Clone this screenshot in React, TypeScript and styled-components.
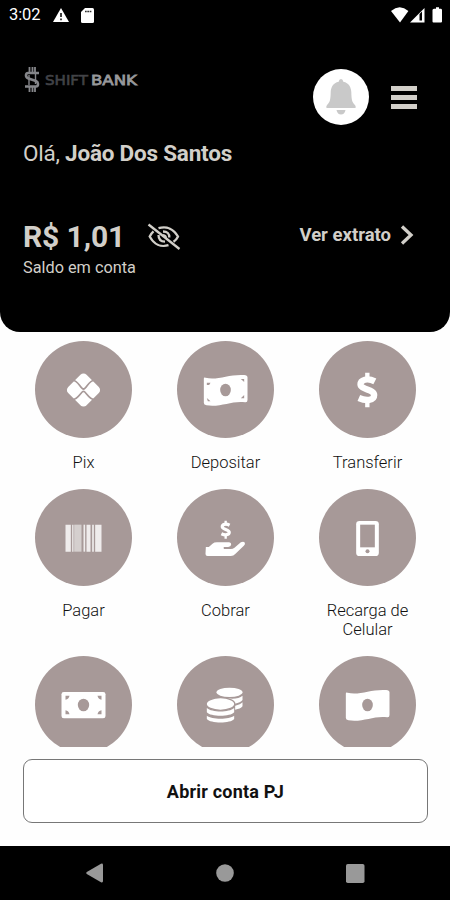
import React from 'react';
import styled, { createGlobalStyle } from 'styled-components';

const TAUPE = '#a79998';
const SAND = '#d2cfc9';

const GlobalStyle = createGlobalStyle`
  * { box-sizing: border-box; }
  body { margin: 0; background: #fff; font-family: Roboto, sans-serif; }
  button { font: inherit; border: 0; padding: 0; background: none; color: inherit; }
  svg { display: block; flex: none; }
`;

const Screen = styled.div`
  width: 450px;
  height: 900px;
  display: flex;
  flex-direction: column;
  overflow: hidden;
  background: #fefefe;
`;

const Header = styled.header`
  height: 332px;
  flex: none;
  background: #000;
  border-radius: 0 0 20px 20px;
  color: ${SAND};
`;

const StatusBar = styled.div`
  height: 30px;
  display: flex;
  align-items: center;
  justify-content: space-between;
  padding: 0 8px 0 9px;
  color: #fff;
`;

const StatusGroup = styled.div<{ $gap: number }>`
  display: flex;
  align-items: center;
  gap: ${p => p.$gap}px;
`;

const Clock = styled.span`
  font-size: 16.5px;
  font-weight: 400;
  line-height: 20px;
  letter-spacing: -0.1px;
  width: 32px;
`;

const BrandRow = styled.div`
  display: flex;
  justify-content: space-between;
  align-items: flex-start;
  height: 109px;
  padding: 37px 33px 0 24px;
`;

const Actions = styled.div`
  display: flex;
  align-items: center;
  gap: 22px;
  margin-top: 2px;
`;

const BellButton = styled.button`
  width: 56px;
  height: 56px;
  border-radius: 50%;
  background: #fff;
  display: grid;
  place-items: center;
`;

const MenuButton = styled.button`
  width: 26px;
  display: flex;
  flex-direction: column;
  gap: 4px;
`;

const MenuBar = styled.span`
  height: 5px;
  background: ${SAND};
`;

const Greeting = styled.h1`
  margin: 0;
  padding-left: 23px;
  font-size: 22.5px;
  font-weight: 400;
  line-height: 28px;
  height: 80px;
  letter-spacing: -0.22px;
`;

const AccountRow = styled.div`
  display: flex;
  justify-content: space-between;
  align-items: flex-start;
  padding: 0 36px 0 23px;
`;

const BalanceLine = styled.div`
  display: flex;
  align-items: center;
  gap: 22px;
  height: 35px;
`;

const Balance = styled.strong`
  font-size: 30px;
  font-weight: 700;
  line-height: 36px;
  letter-spacing: -0.1px;
  width: 102px;
  white-space: nowrap;
`;

const Caption = styled.div`
  font-size: 16.3px;
  line-height: 20px;
  margin-top: 4px;
`;

const StatementLink = styled.button`
  display: flex;
  align-items: center;
  gap: 9px;
  height: 31px;
  font-size: 18.5px;
  font-weight: 700;
`;

const Services = styled.main`
  height: 415px;
  flex: none;
  overflow: hidden;
  display: grid;
  grid-template-columns: repeat(3, 142px);
  grid-template-rows: 148px 167px 148px;
  justify-content: center;
  padding: 9px 0 0 1px;
`;

const Service = styled.div`
  display: flex;
  flex-direction: column;
  align-items: center;
`;

const Disc = styled.div`
  width: 97px;
  height: 97px;
  flex: none;
  border-radius: 50%;
  background: ${TAUPE};
  display: grid;
  place-items: center;
`;

const ServiceName = styled.span`
  width: 100px;
  margin-top: 15px;
  text-align: center;
  font-size: 16.5px;
  line-height: 19px;
  font-weight: 300;
  color: #111;
`;

const Footer = styled.div`
  height: 99px;
  flex: none;
  padding: 12px 22px 0 23px;
`;

const OpenAccount = styled.button`
  width: 100%;
  height: 64px;
  border: 1px solid #777;
  border-radius: 9px;
  background: #fff;
  color: #111;
  font-size: 18px;
  font-weight: 700;
  letter-spacing: 0.2px;
  padding-top: 1px;
`;

const NavBar = styled.nav`
  flex: 1;
  background: #000;
  display: flex;
  justify-content: space-between;
  align-items: center;
  padding: 0 85px 0 86px;
`;

const Glyph = ({ children }: { children: React.ReactNode }) => (
  <svg width="48" height="48" viewBox="-70.5 -72 144 144" fill="#fff">{children}</svg>
);

const PixIcon = () => (
  <Glyph>
    <rect x="-39" y="-39" width="78" height="78" rx="13" transform="rotate(45)" />
    <path d="M-34-30C-16-27-14-14-4-5Q0-1 4-5C14-14 16-27 34-30M-34 30C-16 27-14 16-4 6Q0 2 4 6C14 16 16 27 34 30" fill="none" stroke={TAUPE} strokeWidth="5" />
  </Glyph>
);

const WavyBill = ({ corners = false }: { corners?: boolean }) => (
  <Glyph>
    <path d="M-65-33Q-66-38-60-37C-25-28 10-48 56-45Q66-44 66-38V30Q66 38 59 37C20 31-15 53-57 46Q-65 45-65 39Z" />
    <ellipse cx="0" cy="0" rx="16" ry="19" fill={TAUPE} />
    {corners && (
      <path d="M-56-22h11l-4 7h-7zM46-33h10v9zM-56 24l11 10h-8zM56 15v10H46z" fill={TAUPE} />
    )}
  </Glyph>
);

const FlatBill = () => (
  <Glyph>
    <rect x="-66" y="-39" width="132" height="79" rx="7" />
    <ellipse rx="17" ry="19" fill={TAUPE} />
    <path d="M-54-28h12q-2 10-12 12zM54-28H42q2 10 12 12zM-54 28h12q-2-10-12-12zM54 28H42q2-10 12-12z" fill={TAUPE} />
  </Glyph>
);

const dollarStroke = 'M22-26C-1-38-21-30-21-17C-21-1 20-2 20 15C20 32-4 34-26 24';

const DollarIcon = () => (
  <Glyph>
    <path d={dollarStroke} fill="none" stroke="#fff" strokeWidth="19" />
    <path d="M-7-52H6V-30H-7zM-7 28H6V52H-7z" />
  </Glyph>
);

const BarcodeIcon = () => (
  <Glyph>
    <g opacity=".82">
      <path d="M-54-40h16v81h-16zM-34-40h4v81h-4zM9-40h12v81H9zM26-40h5v81h-5zM35-40h19v81H35z" />
      <path d="M-28-40H-6v81h-22z" opacity=".65" />
      <path d="M0-40h5v81H0z" />
    </g>
  </Glyph>
);

const ReceiveIcon = () => (
  <Glyph>
    <path d={dollarStroke} fill="none" stroke="#fff" strokeWidth="19" transform="translate(1 -25) scale(.51)" />
    <path d="M-3-52h7v14h-7zM-3-12h7V2h-7z" />
    <path d="M-59 27H-50L-39 17Q-34 13-26 13H11Q18 14 17 20Q16 26 8 27H-5Q-7 31-4 33H16Q22 33 27 29L46 13Q54 9 58 14Q60 18 55 23L30 47Q24 54 16 54H-54Q-60 54-60 48Z" />
  </Glyph>
);

const PhoneIcon = () => (
  <Glyph>
    <rect x="-34" y="-51" width="68" height="105" rx="10" />
    <rect x="-22" y="-40" width="44" height="68" fill={TAUPE} />
    <circle cx="0" cy="40" r="6" fill={TAUPE} />
  </Glyph>
);

const CoinsIcon = () => (
  <Glyph>
    <ellipse cx="12" cy="-38" rx="39" ry="14" />
    <path d="M51-28V-15Q45-7 28-4Q22-14 5-20Q38-16 51-28ZM51-8V4Q45 12 29 14V2Q45-1 51-8Z" />
    <ellipse cx="-15" cy="-3" rx="43" ry="19" stroke={TAUPE} strokeWidth="4" />
    <path d="M-56 9C-41 23 11 23 26 9V22C16 36-46 36-56 22ZM-56 32C-41 44 11 44 26 32V42C16 56-46 56-56 42Z" />
  </Glyph>
);

const services: { name: string; icon: React.ReactNode }[] = [
  { name: 'Pix', icon: <PixIcon /> },
  { name: 'Depositar', icon: <WavyBill corners /> },
  { name: 'Transferir', icon: <DollarIcon /> },
  { name: 'Pagar', icon: <BarcodeIcon /> },
  { name: 'Cobrar', icon: <ReceiveIcon /> },
  { name: 'Recarga de Celular', icon: <PhoneIcon /> },
  { name: '', icon: <FlatBill /> },
  { name: '', icon: <CoinsIcon /> },
  { name: '', icon: <WavyBill /> },
];

const Logo = () => (
  <svg width="116" height="26" viewBox="0 0 116 26">
    <g fill="none" stroke="#85868a">
      <path d="M5.500 0V6M8.500 0V6M11 0V6M5.500 19V25M8.500 19V25M11 19V25" strokeWidth="1.800" />
      <path d="M15 6H4Q2 6 2 8.500Q2 10.500 4.500 11.500L12 14Q14 15 14 17Q14 19.500 12 19.500H1" strokeWidth="2.600" />
      <path d="M5 8V18M11.500 7V17" strokeWidth="1.400" />
    </g>
    <g fontFamily="'DejaVu Sans', sans-serif" fontSize="14.500">
      <text x="21" y="17.500" fill="#424347" stroke="#424347" strokeWidth=".6" textLength="43" lengthAdjust="spacingAndGlyphs">SHIFT</text>
      <text x="67" y="17.500" fill="#97989b" stroke="#97989b" strokeWidth=".8" textLength="46" lengthAdjust="spacingAndGlyphs">BANK</text>
    </g>
  </svg>
);

export default function App() {
  return (
    <>
      <GlobalStyle />
      <Screen>
        <Header>
          <StatusBar>
            <StatusGroup $gap={12}>
              <Clock>3:02</Clock>
              <svg width="16" height="14" viewBox="0 0 16 14">
                <path d="M8 0L16 14H0Z" fill="#fff" />
                <path d="M8 5v4M8 10.500v1.700" stroke="#000" strokeWidth="1.500" />
              </svg>
              <svg width="13" height="15" viewBox="0 0 13 15">
                <path d="M4 0H11.500Q13 0 13 1.500V13.500Q13 15 11.500 15H1.500Q0 15 0 13.500V4Z" fill="#fff" />
                <path d="M4 3.500H11" stroke="#333" strokeWidth="1.400" strokeDasharray="1.7 .6" />
              </svg>
            </StatusGroup>
            <StatusGroup $gap={0}>
              <svg width="51" height="16" viewBox="0 0 51 16" fill="#fff">
                <path d="M0 4Q8.700-3.300 17.400 4L9 15.500Z" />
                <path d="M33.500 1V15.500H19Z" />
                <path d="M31 4.500V13.500H28.500V7Z" fill="#000" />
                <path d="M43 1.800H45V.2H48V1.800H50Q51 2 51 3V14.500Q51 15.500 50 15.500H42.500Q41.500 15.500 41.500 14.500V3Q41.500 2 43 1.800Z" />
              </svg>
            </StatusGroup>
          </StatusBar>
          <BrandRow>
            <Logo />
            <Actions>
              <BellButton aria-label="Notificações">
                <svg width="30" height="36" viewBox="0 0 30 36" fill="#c9c9c9">
                  <path d="M15 0Q17 0 17.300 2.800C23 4 25 8.500 25.300 13C25.500 21 26 23 29 26Q30.500 28.500 29 29H1Q-.5 28.500 1 26C4 23 4.500 21 4.700 13C5 8.500 7 4 12.700 2.800Q13 0 15 0Z" />
                  <path d="M10.500 31H19.500Q18.500 35.500 15 35.500T10.500 31Z" />
                </svg>
              </BellButton>
              <MenuButton aria-label="Menu">
                <MenuBar />
                <MenuBar />
                <MenuBar />
              </MenuButton>
            </Actions>
          </BrandRow>
          <Greeting>Olá, <b>João Dos Santos</b></Greeting>
          <AccountRow>
            <div>
              <BalanceLine>
                <Balance>R$ 1,01</Balance>
                <svg width="34" height="28" viewBox="0 0 34 28" fill="none" stroke={SAND} strokeWidth="2.300">
                  <path d="M1.500 1.500L32.500 26" />
                  <path d="M11.500 5.200C20 2.500 27 6.500 31 13.500Q29.500 16.800 26.500 18.800" />
                  <path d="M6.500 8.300Q4 10.500 2.700 13.500C7 21.500 14 24.500 21.500 22.200" />
                  <path d="M16 8.500Q22.500 8.500 22.300 14.500M11.500 12Q11.500 18.500 18 18.700M16 12.200Q18.800 12.500 18.800 15" />
                </svg>
              </BalanceLine>
              <Caption>Saldo em conta</Caption>
            </div>
            <StatementLink>
              Ver extrato
              <svg width="14" height="20" viewBox="0 0 14 20" fill="none" stroke={SAND} strokeWidth="3.300">
                <path d="M2 1.500L11 10L2 18.500" />
              </svg>
            </StatementLink>
          </AccountRow>
        </Header>
        <Services>
          {services.map((s, i) => (
            <Service key={i}>
              <Disc>{s.icon}</Disc>
              {s.name && <ServiceName>{s.name}</ServiceName>}
            </Service>
          ))}
        </Services>
        <Footer>
          <OpenAccount>Abrir conta PJ</OpenAccount>
        </Footer>
        <NavBar>
          <svg width="17" height="20" viewBox="0 0 17 20" fill="#999">
            <path d="M15 .7Q17 0 17 2V18Q17 20 15 19.300L.8 11Q-.3 10 .8 9Z" />
          </svg>
          <svg width="18" height="18" viewBox="0 0 18 18" fill="#999"><circle cx="9" cy="9" r="8.800" /></svg>
          <svg width="19" height="19" viewBox="0 0 19 19" fill="#999"><rect width="18.500" height="19" rx="1.800" /></svg>
        </NavBar>
      </Screen>
    </>
  );
}
